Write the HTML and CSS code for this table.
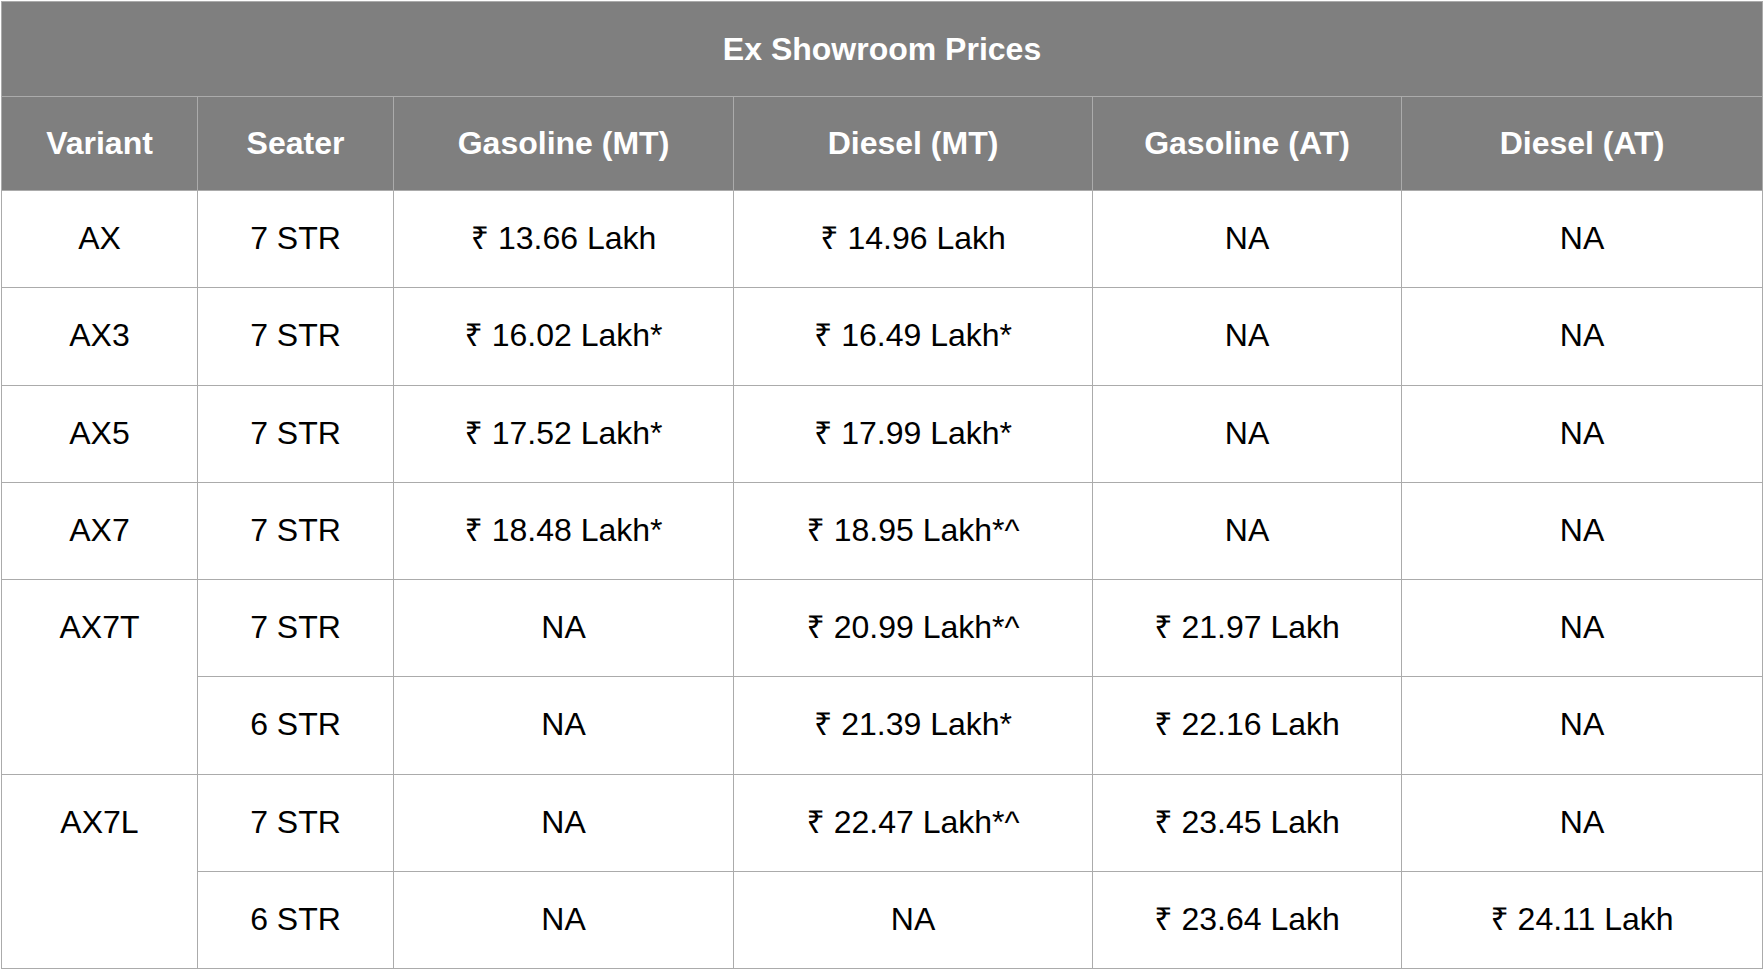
FILE: index.html
```html
<!DOCTYPE html>
<html lang="en">
<head>
<meta charset="utf-8">
<title>Ex Showroom Prices</title>
<link rel="stylesheet" href="styles.css">
</head>
<body>
<table class="prices">
  <colgroup>
    <col class="c-variant">
    <col class="c-seater">
    <col class="c-gmt">
    <col class="c-dmt">
    <col class="c-gat">
    <col class="c-dat">
  </colgroup>
  <thead>
    <tr class="title-row"><th colspan="6">Ex Showroom Prices</th></tr>
    <tr class="head-row">
      <th>Variant</th>
      <th>Seater</th>
      <th>Gasoline (MT)</th>
      <th>Diesel (MT)</th>
      <th>Gasoline (AT)</th>
      <th>Diesel (AT)</th>
    </tr>
  </thead>
  <tbody>
    <tr><td>AX</td><td>7 STR</td><td>₹ 13.66 Lakh</td><td>₹ 14.96 Lakh</td><td>NA</td><td>NA</td></tr>
    <tr><td>AX3</td><td>7 STR</td><td>₹ 16.02 Lakh*</td><td>₹ 16.49 Lakh*</td><td>NA</td><td>NA</td></tr>
    <tr><td>AX5</td><td>7 STR</td><td>₹ 17.52 Lakh*</td><td>₹ 17.99 Lakh*</td><td>NA</td><td>NA</td></tr>
    <tr><td>AX7</td><td>7 STR</td><td>₹ 18.48 Lakh*</td><td>₹ 18.95 Lakh*^</td><td>NA</td><td>NA</td></tr>
    <tr><td rowspan="2">AX7T</td><td>7 STR</td><td>NA</td><td>₹ 20.99 Lakh*^</td><td>₹ 21.97 Lakh</td><td>NA</td></tr>
    <tr><td>6 STR</td><td>NA</td><td>₹ 21.39 Lakh*</td><td>₹ 22.16 Lakh</td><td>NA</td></tr>
    <tr><td rowspan="2">AX7L</td><td>7 STR</td><td>NA</td><td>₹ 22.47 Lakh*^</td><td>₹ 23.45 Lakh</td><td>NA</td></tr>
    <tr><td>6 STR</td><td>NA</td><td>NA</td><td>₹ 23.64 Lakh</td><td>₹ 24.11 Lakh</td></tr>
  </tbody>
</table>
</body>
</html>
```

FILE: styles.css
```css
html, body {
  margin: 0;
  background: #ffffff;
}

body {
  padding: 1px 0 0 1px;
  font-family: "Liberation Sans", Arial, "Noto Sans", "DejaVu Sans", sans-serif;
  font-size: 32px;
  color: #000000;
}

.prices {
  border-collapse: collapse;
  table-layout: fixed;
  width: 1762px;
}

.c-variant { width: 196px; }
.c-seater { width: 196px; }
.c-gmt { width: 340px; }
.c-dmt { width: 359px; }
.c-gat { width: 309px; }
.c-dat { width: 361px; }

.prices th,
.prices td {
  border: 1px solid #ababab;
  text-align: center;
  vertical-align: top;
  padding: 29px 4px 0;
  line-height: 37px;
  box-sizing: border-box;
}

.prices th {
  background: #7f7f7f;
  color: #ffffff;
  font-weight: bold;
}

.title-row th {
  height: 95px;
}

.head-row th {
  height: 94px;
  padding-top: 28px;
}

.prices tbody tr {
  height: 97.3px;
}

.prices tbody td {
  padding-top: 29px;
}
```
